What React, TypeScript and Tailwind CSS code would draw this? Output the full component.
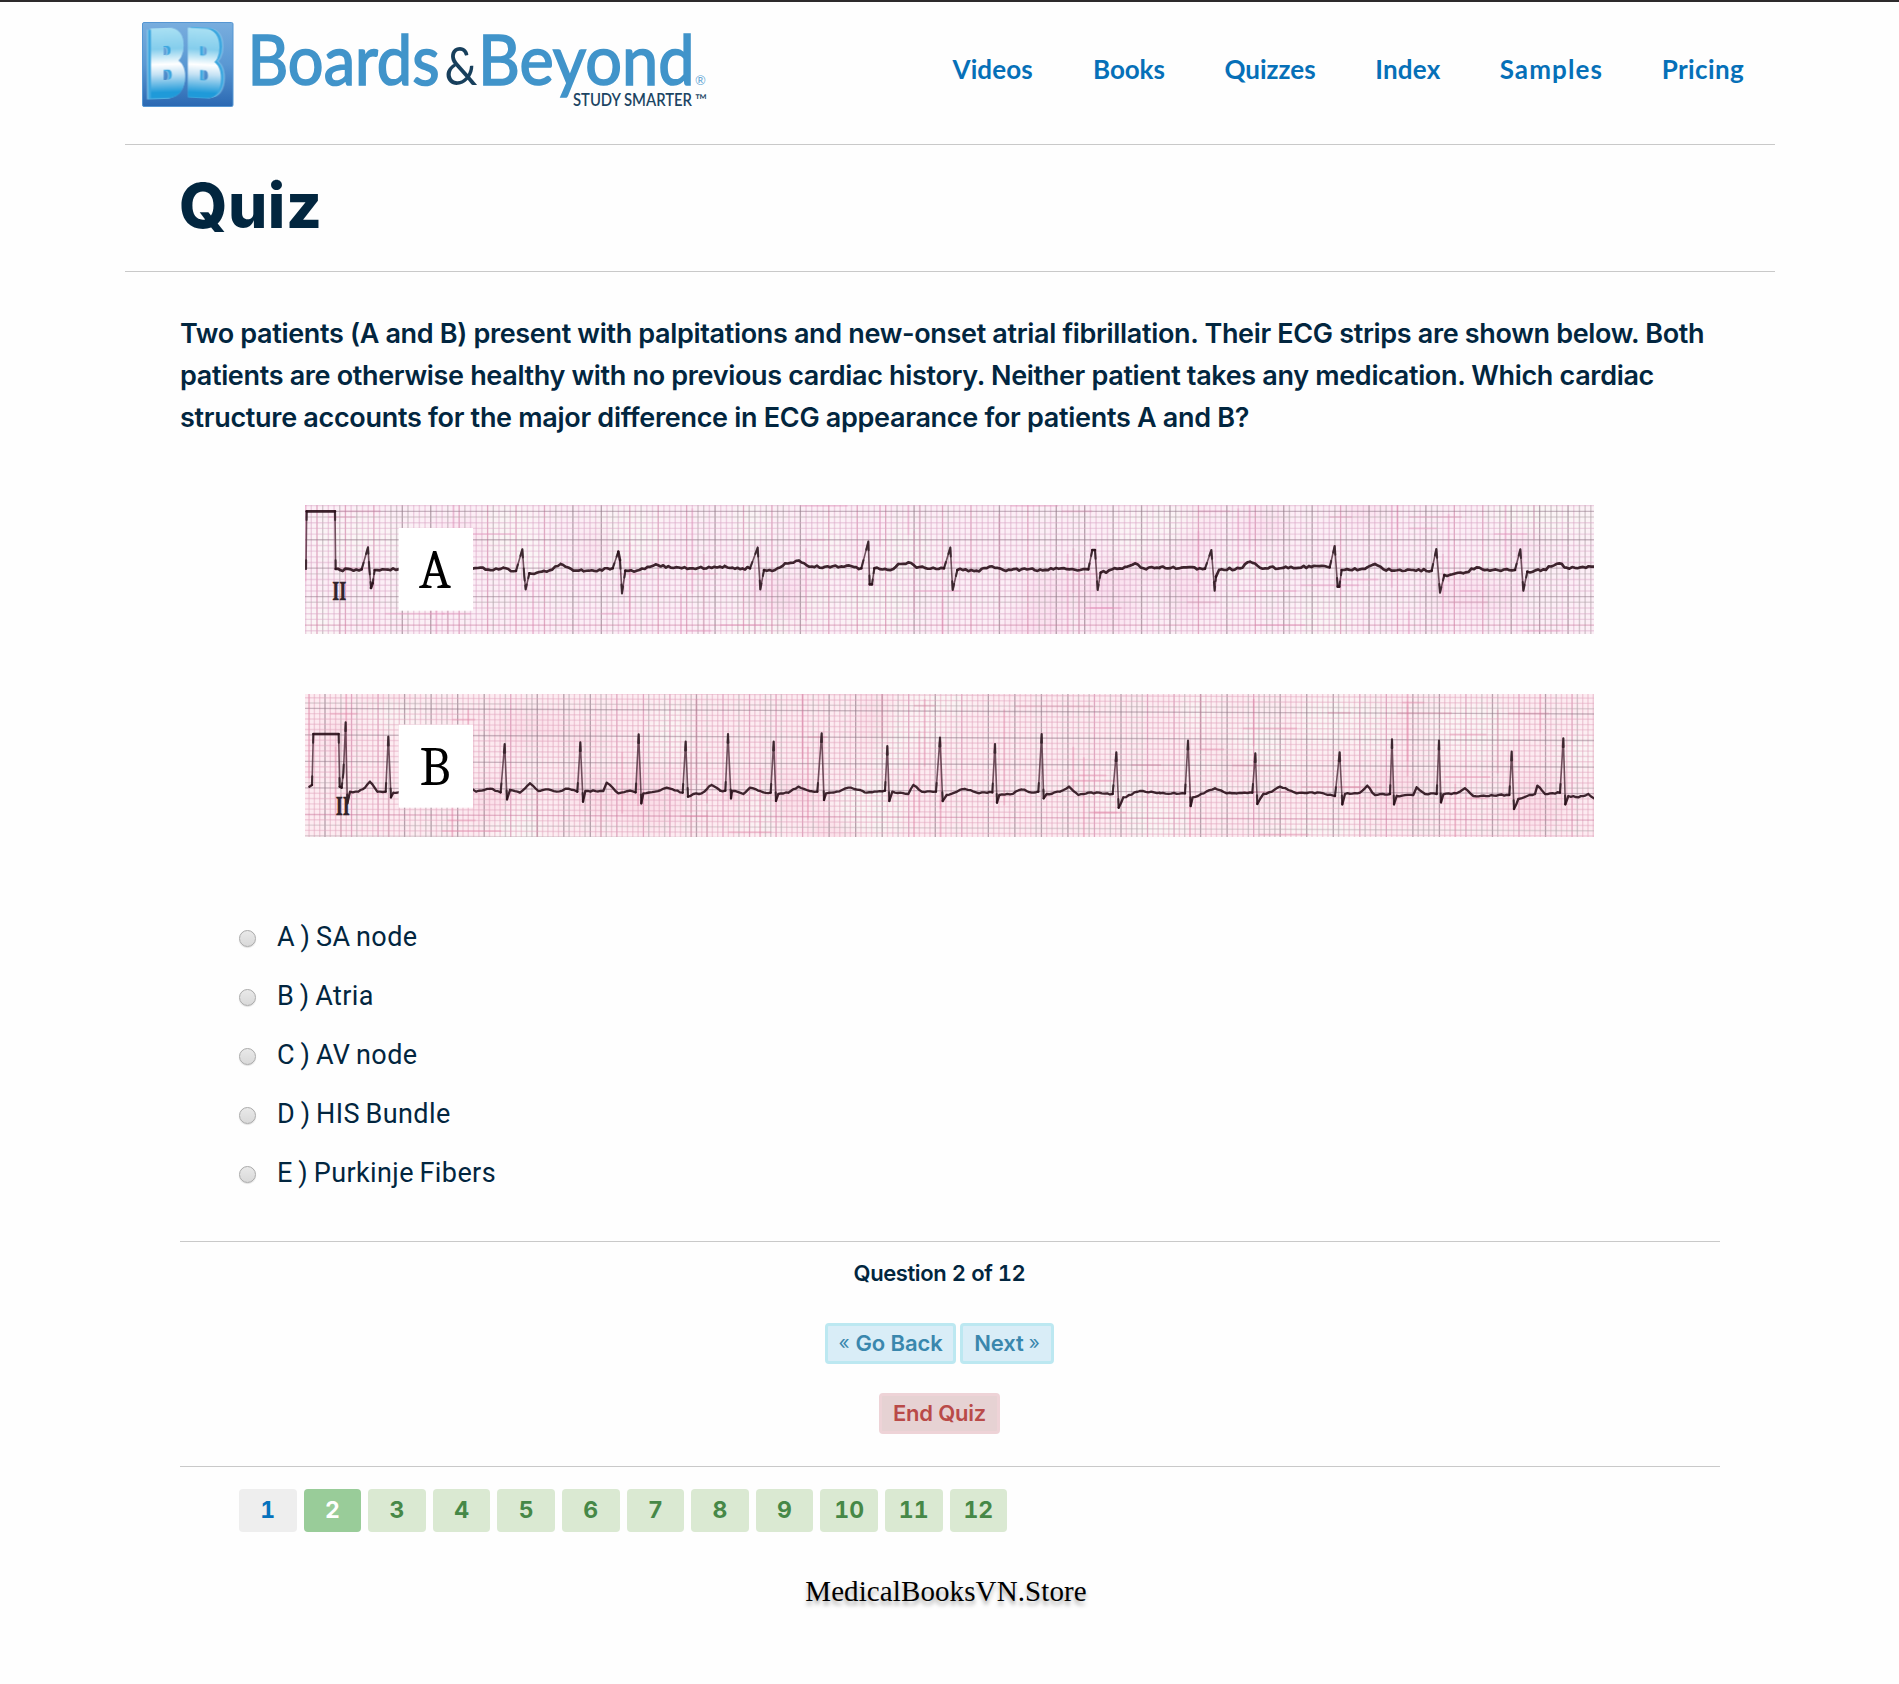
type Point = [number, number];

const NAV = [
  { label: "Videos", className: "w-[140.6px] tracking-[0.1px]" },
  { label: "Books", className: "w-[131.4px] tracking-[-0.1px]" },
  { label: "Quizzes", className: "w-[150.8px]" },
  { label: "Index", className: "w-[124.4px] tracking-[0.2px]" },
  { label: "Samples", className: "w-[162px] tracking-[1.1px]" },
  { label: "Pricing", className: "w-[84px] tracking-[0.4px]" },
];

const OPTIONS = ["A ) SA node", "B ) Atria", "C ) AV node", "D ) HIS Bundle", "E ) Purkinje Fibers"];

const PAGES = [1, 2, 3, 4, 5, 6, 7, 8, 9, 10, 11, 12];

const shift = (dx: number, dy: number, pts: Point[]): Point[] => pts.map(([x, y]) => [x + dx, y + dy]);

// Lead II traces, three drawing units to a pixel.
const TRACE_A: Point[] = [
  ...shift(-45, -45, [
    [48, 237], [50, 64], [135, 64], [137, 237], [150, 240], [215, 238], [234, 172], [238, 235], [243, 294], [248, 280], [254, 240],
    [325, 238], [548, 236], [625, 238], [640, 233], [662, 243], [678, 243], [697, 178], [703, 260], [707, 298], [718, 250], [770, 245], [812, 222],
    [850, 242], [960, 238], [968, 235], [985, 185], [990, 210], [996, 310], [1006, 242], [1040, 242], [1097, 223], [1150, 234], [1200, 235], [1289, 230],
  ]),
  ...shift(1245, -45, [
    [0, 230], [14, 228], [30, 234], [90, 235], [113, 173], [121, 298], [132, 240], [165, 240], [195, 220], [237, 212], [260, 226], [330, 232],
    [380, 227], [424, 235], [445, 155], [449, 283], [456, 283], [463, 235], [520, 237], [535, 222], [565, 217], [590, 233], [672, 235],
    [691, 173], [698, 300], [712, 240], [770, 242], [808, 230], [850, 240], [1000, 238], [1105, 238], [1117, 180], [1125, 180],
    [1133, 300], [1142, 248], [1200, 235], [1245, 220], [1270, 235], [1319, 234],
  ]),
  ...shift(2565, -45, [
    [0, 232], [135, 236], [154, 180], [164, 302], [168, 260], [177, 240], [240, 235], [270, 215], [300, 233], [400, 234], [470, 228], [509, 232],
    [524, 168], [533, 290], [538, 290], [545, 240], [600, 238], [645, 222], [670, 238], [760, 240], [815, 242], [829, 177],
    [840, 308], [853, 255], [910, 250], [950, 232], [990, 242], [1065, 240], [1081, 178], [1090, 302], [1102, 245], [1150, 238],
    [1198, 220], [1220, 233], [1302, 230],
  ]),
];

const TRACE_B: Point[] = [
  ...shift(-45, -612, [
    [58, 890], [66, 885], [70, 732], [146, 732], [149, 890], [155, 893], [160, 850], [167, 697], [172, 940], [180, 905], [205, 905], [225, 893],
    [240, 875], [262, 905], [287, 905], [295, 740], [303, 922], [310, 908], [325, 907], [548, 898], [558, 905], [600, 896], [632, 907],
    [644, 762], [651, 928], [660, 900], [690, 908], [720, 880], [745, 903], [775, 898], [800, 905], [835, 896], [862, 905], [871, 757],
    [879, 935], [886, 903], [940, 903], [950, 878], [985, 910], [1020, 902], [1037, 907], [1046, 733], [1054, 940], [1060, 910],
    [1095, 905], [1130, 893], [1178, 908], [1187, 755], [1194, 920], [1210, 912], [1235, 910], [1265, 885], [1289, 900],
  ]),
  ...shift(1245, -612, [
    [0, 902], [16, 902], [24, 732], [33, 925], [36, 903], [70, 912], [90, 893], [130, 907], [152, 908], [161, 755], [168, 933], [175, 912],
    [205, 908], [235, 890], [260, 900], [292, 905], [305, 730], [312, 930], [318, 910], [350, 905], [385, 893], [420, 900],
    [440, 908], [495, 902], [502, 768], [508, 933], [517, 905], [565, 912], [580, 885], [605, 905], [648, 905], [660, 743],
    [668, 933], [680, 915], [735, 897], [770, 908], [817, 907], [825, 762], [831, 938], [838, 915], [870, 913], [905, 898],
    [935, 908], [955, 905], [965, 732], [971, 925], [980, 912], [1020, 905], [1047, 890], [1075, 915], [1105, 908], [1178, 912],
    [1189, 787], [1196, 953], [1210, 922], [1260, 903], [1319, 908],
  ]),
  ...shift(2565, -612, [
    [0, 910], [75, 910], [84, 752], [92, 948], [98, 922], [165, 895], [200, 910], [277, 908], [286, 790], [292, 942], [310, 912],
    [335, 905], [360, 890], [410, 910], [480, 908], [525, 918], [539, 787], [547, 943], [555, 912], [600, 908], [622, 887],
    [645, 915], [690, 912], [696, 748], [702, 943], [710, 918], [760, 915], [770, 892], [795, 912], [830, 912], [837, 752],
    [843, 937], [850, 913], [890, 910], [915, 895], [940, 918], [1048, 915], [1055, 785], [1062, 957], [1075, 927], [1125, 912],
    [1132, 887], [1155, 912], [1200, 908], [1210, 745], [1216, 943], [1225, 918], [1255, 922], [1285, 912], [1302, 925],
  ]),
];

const noise = (n: number) => {
  const v = Math.sin(n * 127.1 + 11.7) * 43758.5453;
  return v - Math.floor(v);
};

// Splits a trace into its flat, inky runs and its steep, thin strokes.
function tracePaths(points: Point[], jitter: number) {
  let flat = "";
  let steep = "";
  let tips = "";
  for (let i = 1; i < points.length; i++) {
    const [x0, y0] = points[i - 1];
    const [x1, y1] = points[i];
    const dx = x1 - x0;
    const dy = y1 - y0;
    if (Math.abs(dy) > 35) {
      steep += `M${x0} ${y0}L${x1} ${y1}`;
      const k = Math.min(0.3, 26 / Math.abs(dy));
      tips += `M${x1} ${y1}L${x1 - dx * k} ${y1 - dy * k}M${x0} ${y0}L${x0 + dx * k} ${y0 + dy * k}`;
      continue;
    }
    const steps = Math.max(1, Math.round(dx / 8));
    const wobble = i === 2 || i === 3 ? 0 : jitter;
    flat += `M${x0} ${y0}`;
    for (let s = 1; s <= steps; s++) {
      const t = s / steps;
      const ease = (t + t * t * (3 - 2 * t)) / 2;
      const j = s === steps ? 0 : (noise(x0 + s * 3.3) - 0.5) * wobble;
      flat += `L${(x0 + dx * t).toFixed(1)} ${(y0 + dy * ease + j).toFixed(1)}`;
    }
  }
  return { flat, steep, tips };
}

type StripProps = {
  letter: string;
  points: Point[];
  height: number;
  majorX: number;
  majorY: number;
  pitch: number;
  tilt: number;
  jitter: number;
  ink: number;
  boxTop: number;
  boxHeight: number;
  letterY: number;
  lead: Point;
  paper: string;
  fine: string;
  warm: string;
  streak: string;
  className: string;
};

function EcgStrip(p: StripProps) {
  const width = 3867;
  const fine = p.pitch / 5;
  const { flat, steep, tips } = tracePaths(p.points, p.jitter);
  const firstX = p.majorX - Math.ceil(p.majorX / fine) * fine;
  const firstY = p.majorY - Math.ceil(p.majorY / fine) * fine;
  const xs: { x: number; major: boolean; k: number }[] = [];
  for (let i = 0; firstX + i * fine < width; i++) {
    const x = firstX + i * fine;
    const m = Math.round((x - p.majorX) / fine);
    xs.push({ x, major: m % 5 === 0, k: noise(i * 2.3 + p.height) });
  }
  const ys: { y: number; major: boolean; k: number }[] = [];
  for (let i = 0; firstY + i * fine < p.height; i++) {
    const y = firstY + i * fine;
    const m = Math.round((y - p.majorY) / fine);
    ys.push({ y, major: m % 5 === 0, k: noise(i * 5.1 + 3) });
  }
  const patches = Array.from({ length: 34 }, (_, i) => ({
    x: noise(i * 3 + p.pitch) * width,
    y: noise(i * 7 + 1) * p.height,
    rx: 40 + noise(i + 40) * 110,
    ry: 30 + noise(i + 90) * 60,
    warm: noise(i + 12) > 0.5,
  }));
  const streaks = Array.from({ length: 70 }, (_, i) => {
    const across = noise(i * 1.7 + p.height) > 0.5;
    const x = firstX + Math.floor(noise(i + 0.3) * xs.length) * fine;
    const y = firstY + Math.floor(noise(i + 7.9) * ys.length) * fine;
    const tilt = (p.tilt * x) / width;
    return across
      ? { x1: x, y1: y + tilt, x2: x + 50 + noise(i) * 130, y2: y + tilt }
      : { x1: x, y1: y - 60, x2: x, y2: y + 70 + noise(i) * 160 };
  });
  const glow = `glow-${p.letter}`;
  return (
    <svg className={p.className} viewBox={`0 0 ${width} ${p.height}`} preserveAspectRatio="none" role="img" aria-label={`ECG strip ${p.letter}`}>
      <defs>
        <filter id={glow} x="-50%" y="-50%" width="200%" height="200%">
          <feGaussianBlur stdDeviation="26" />
        </filter>
      </defs>
      <rect width={width} height={p.height} fill={p.paper} />
      {patches.map((c, i) => (
        <ellipse key={i} cx={c.x} cy={c.y} rx={c.rx} ry={c.ry} fill={c.warm ? p.warm : "#fbf7f6"} opacity={c.warm ? "0.4" : "0.8"} filter={`url(#${glow})`} />
      ))}
      {xs.map(({ x, major, k }, i) => (
        <line
          key={i}
          x1={x}
          x2={x}
          y1="0"
          y2={p.height}
          stroke={major ? (k > 0.4 ? "#8d7481" : "#cf7fa3") : k > 0.7 ? "#a99ca2" : p.fine}
          strokeOpacity={major ? 0.62 : 0.5}
          strokeWidth={major ? 4 : 4.2}
        />
      ))}
      {ys.map(({ y, major, k }, i) => (
        <line
          key={i}
          x1="0"
          x2={width}
          y1={y}
          y2={y + p.tilt}
          stroke={major ? (k > 0.35 ? "#94798a" : "#cc7a9d") : k > 0.6 ? "#b7a8af" : p.fine}
          strokeOpacity={major ? 0.5 : 0.45}
          strokeWidth={major ? 4 : 4.2}
        />
      ))}
      {streaks.map((s, i) => (
        <line key={i} {...s} stroke={p.streak} strokeOpacity="0.28" strokeWidth="6" />
      ))}
      <g fill="none" strokeLinecap="round" strokeLinejoin="round">
        <path d={steep} stroke="#573543" strokeWidth="4.8" strokeOpacity="0.85" />
        <path d={tips} stroke="#2b1a20" strokeWidth="6.5" strokeOpacity="0.75" />
        <path d={flat} stroke="#2a0f1a" strokeWidth={p.ink} strokeOpacity="0.9" />
      </g>
      <text x={p.lead[0]} y={p.lead[1]} textLength="42" lengthAdjust="spacingAndGlyphs" className="fill-[#33252b] stroke-[#33252b] stroke-1 font-['Cambria','Liberation_Serif',serif] text-[76px] font-bold">
        II
      </text>
      <rect x="281" y={p.boxTop} width="223" height={p.boxHeight} fill="#fff" />
      <text x="390" y={p.letterY} textAnchor="middle" className="fill-black font-['Cambria','Liberation_Serif',serif] text-[160px]">
        {p.letter}
      </text>
    </svg>
  );
}

function Logo() {
  return (
    <svg className="h-[92px] w-[570px] overflow-visible" viewBox="140 20 570 92" role="img" aria-label="Boards and Beyond">
      <defs>
        <linearGradient id="tile" x1="0" y1="0" x2="0" y2="1">
          <stop offset="0" stopColor="#79aede" />
          <stop offset="0.5" stopColor="#5a98d3" />
          <stop offset="1" stopColor="#2a68b2" />
        </linearGradient>
        <linearGradient id="face" gradientUnits="userSpaceOnUse" x1="0" y1="-68" x2="0" y2="2">
          <stop offset="0" stopColor="#a9e0f3" />
          <stop offset="0.3" stopColor="#84cdec" />
          <stop offset="0.52" stopColor="#ffffff" />
          <stop offset="0.66" stopColor="#c5e2f4" />
          <stop offset="0.92" stopColor="#1f9ad9" />
        </linearGradient>
      </defs>
      <rect x="142.5" y="22.5" width="90.5" height="84" rx="1.5" fill="url(#tile)" stroke="#5596d2" />
      <g fill="url(#face)" stroke="url(#face)" strokeWidth="3.5" className="font-['Inter',sans-serif] text-[91px] font-black">
        <text transform="translate(149.5 96.5) skewY(-2) scale(0.59 1)" className="[filter:drop-shadow(-4.5px_1px_0_#3ca6df)_drop-shadow(-1px_0_0_#b5e4f6)]">B</text>
        <text transform="translate(186.5 95.5) skewY(3) scale(0.57 1)" className="[filter:drop-shadow(5px_-0.5px_0_#3ca6df)_drop-shadow(1.5px_0_0_#a5dbf3)]">B</text>
      </g>
      <g className="font-['Lato',sans-serif] text-[69px]" fill="#4194ca" stroke="#4194ca" strokeWidth="1.7">
        <text x="247.5" y="85" textLength="192" lengthAdjust="spacingAndGlyphs">Boards</text>
        <text x="478" y="85" textLength="216.5" lengthAdjust="spacingAndGlyphs">Beyond</text>
      </g>
      <text x="444.5" y="85" textLength="33" lengthAdjust="spacingAndGlyphs" className="fill-[#173f5c] font-['Lato',sans-serif] text-[52px]">&amp;</text>
      <text x="695" y="85" className="fill-[#6aaad6] font-['Lato',sans-serif] text-[13px]">®</text>
      <text x="573" y="106" textLength="119" lengthAdjust="spacingAndGlyphs" className="fill-[#1c4563] font-['Lato',sans-serif] text-[17.5px] font-semibold">STUDY SMARTER</text>
      <text x="695" y="106" textLength="12" lengthAdjust="spacingAndGlyphs" className="fill-[#1c4563] font-['Lato',sans-serif] text-[16px]">™</text>
    </svg>
  );
}

export default function App() {
  return (
    <div className="min-h-[1684px] border-t-2 border-[#2d2a2c] bg-[#fefefe] font-['Inter',sans-serif] text-[#02263f]">
      <div className="ml-[125px] w-[1650px]">
        <header className="flex h-[143px] border-b border-[#c9c9c9] pl-[15px] pt-[18px]">
          <Logo />
          <nav className="ml-[242.5px] mt-[33px] flex h-8 whitespace-nowrap font-['Lato',sans-serif] text-[26px] font-bold leading-8 text-[#0670b8]">
            {NAV.map((n) => (
              <a key={n.label} className={n.className}>{n.label}</a>
            ))}
          </nav>
        </header>
        <div className="h-[127px] border-b border-[#c9c9c9] pl-[54px] pt-[30px]">
          <h1 className="text-[62px] font-extrabold leading-[62px] tracking-[0.5px]">Quiz</h1>
        </div>
        <main className="px-[55px]">
          <p className="mt-[41px] whitespace-nowrap text-[27px] font-semibold leading-[42px]">
            <span className="block tracking-[-0.335px]">Two patients (A and B) present with palpitations and new-onset atrial fibrillation. Their ECG strips are shown below. Both</span>
            <span className="block tracking-[-0.335px]">patients are otherwise healthy with no previous cardiac history. Neither patient takes any medication. Which cardiac</span>
            <span className="block tracking-[-0.3px]">structure accounts for the major difference in ECG appearance for patients A and B?</span>
          </p>
          <div className="ml-[125px] mt-[66px] flex flex-col gap-[60px]">
            <EcgStrip
              letter="A" points={TRACE_A} height={387} majorX={36} majorY={19} pitch={85.3} tilt={0} jitter={8} ink={8}
              boxTop={69} boxHeight={248} letterY={248} lead={[82, 284]}
              paper="#fceef6" fine="#dba9c8" warm="#f9d0e6" streak="#e58db8" className="block h-[129px] w-[1289px]"
            />
            <EcgStrip
              letter="B" points={TRACE_B} height={429} majorX={60} majorY={43} pitch={79.6} tilt={17} jitter={4} ink={7}
              boxTop={92} boxHeight={249} letterY={272} lead={[92, 363]}
              paper="#fdebf1" fine="#e2a7be" warm="#f9cddd" streak="#e37fa3" className="block h-[143px] w-[1289px]"
            />
          </div>
          <ul className="mt-[72px] pl-[59px]">
            {OPTIONS.map((o) => (
              <li key={o} className="flex h-[59px] items-center">
                <span className="size-[17px] rounded-full border border-[#a9a9a9] bg-linear-to-b from-[#e9e9e9] to-[#d9d9d9] shadow-[0_1px_1px_rgba(0,0,0,0.12)]" />
                <span className="ml-[21px] pb-[3px] font-['Roboto',sans-serif] text-[27px] leading-8 tracking-[0.4px] [word-spacing:-1.5px]">{o}</span>
              </li>
            ))}
          </ul>
          <section className="mt-[37px] flex h-[226px] flex-col items-center border-y border-[#c9c9c9] pr-[21px] pt-[17px] text-[22px] font-semibold">
            <div className="leading-7 tabular-nums tracking-[-0.4px]">Question 2 of 12</div>
            <div className="mt-9 flex gap-1 text-[#3a87ad]">
              <button className="flex h-[41px] w-[131px] items-center justify-center gap-[6px] rounded border-3 border-[#bce8f1] bg-[#d9edf7] tracking-[-0.1px]">
                <span className="text-[19px] font-normal">«</span>Go Back
              </button>
              <button className="flex h-[41px] w-[94px] items-center justify-center gap-[5px] rounded border-3 border-[#bce8f1] bg-[#d9edf7] tracking-[-0.1px]">
                Next<span className="text-[19px] font-normal">»</span>
              </button>
            </div>
            <button className="mt-[29px] h-[41px] w-[121px] rounded border-3 border-[#eed3d7] bg-[#e6d2d3] tracking-[-0.2px] text-[#b94a48]">End Quiz</button>
          </section>
          <div className="mt-[22px] flex gap-[7px] pl-[59px] text-[23px] font-bold tabular-nums text-[#468847]">
            {PAGES.map((n) => (
              <a
                key={n}
                className={`flex h-[43px] w-[57.6px] items-center justify-center rounded ${
                  n === 1 ? "bg-[#eeeeee] text-[#0672bd]" : n === 2 ? "bg-[#99cc99] text-white" : "bg-[#dae9d2]"
                }`}
              >
                {n}
              </a>
            ))}
          </div>
          <footer className="mt-[43px] pr-[8px] text-center font-['Palatino_Linotype','Liberation_Serif',serif] text-[29px] leading-8 tracking-[0.1px] text-black [text-shadow:0_4px_4px_rgba(0,0,0,0.35)]">
            MedicalBooksVN.Store
          </footer>
        </main>
      </div>
    </div>
  );
}
